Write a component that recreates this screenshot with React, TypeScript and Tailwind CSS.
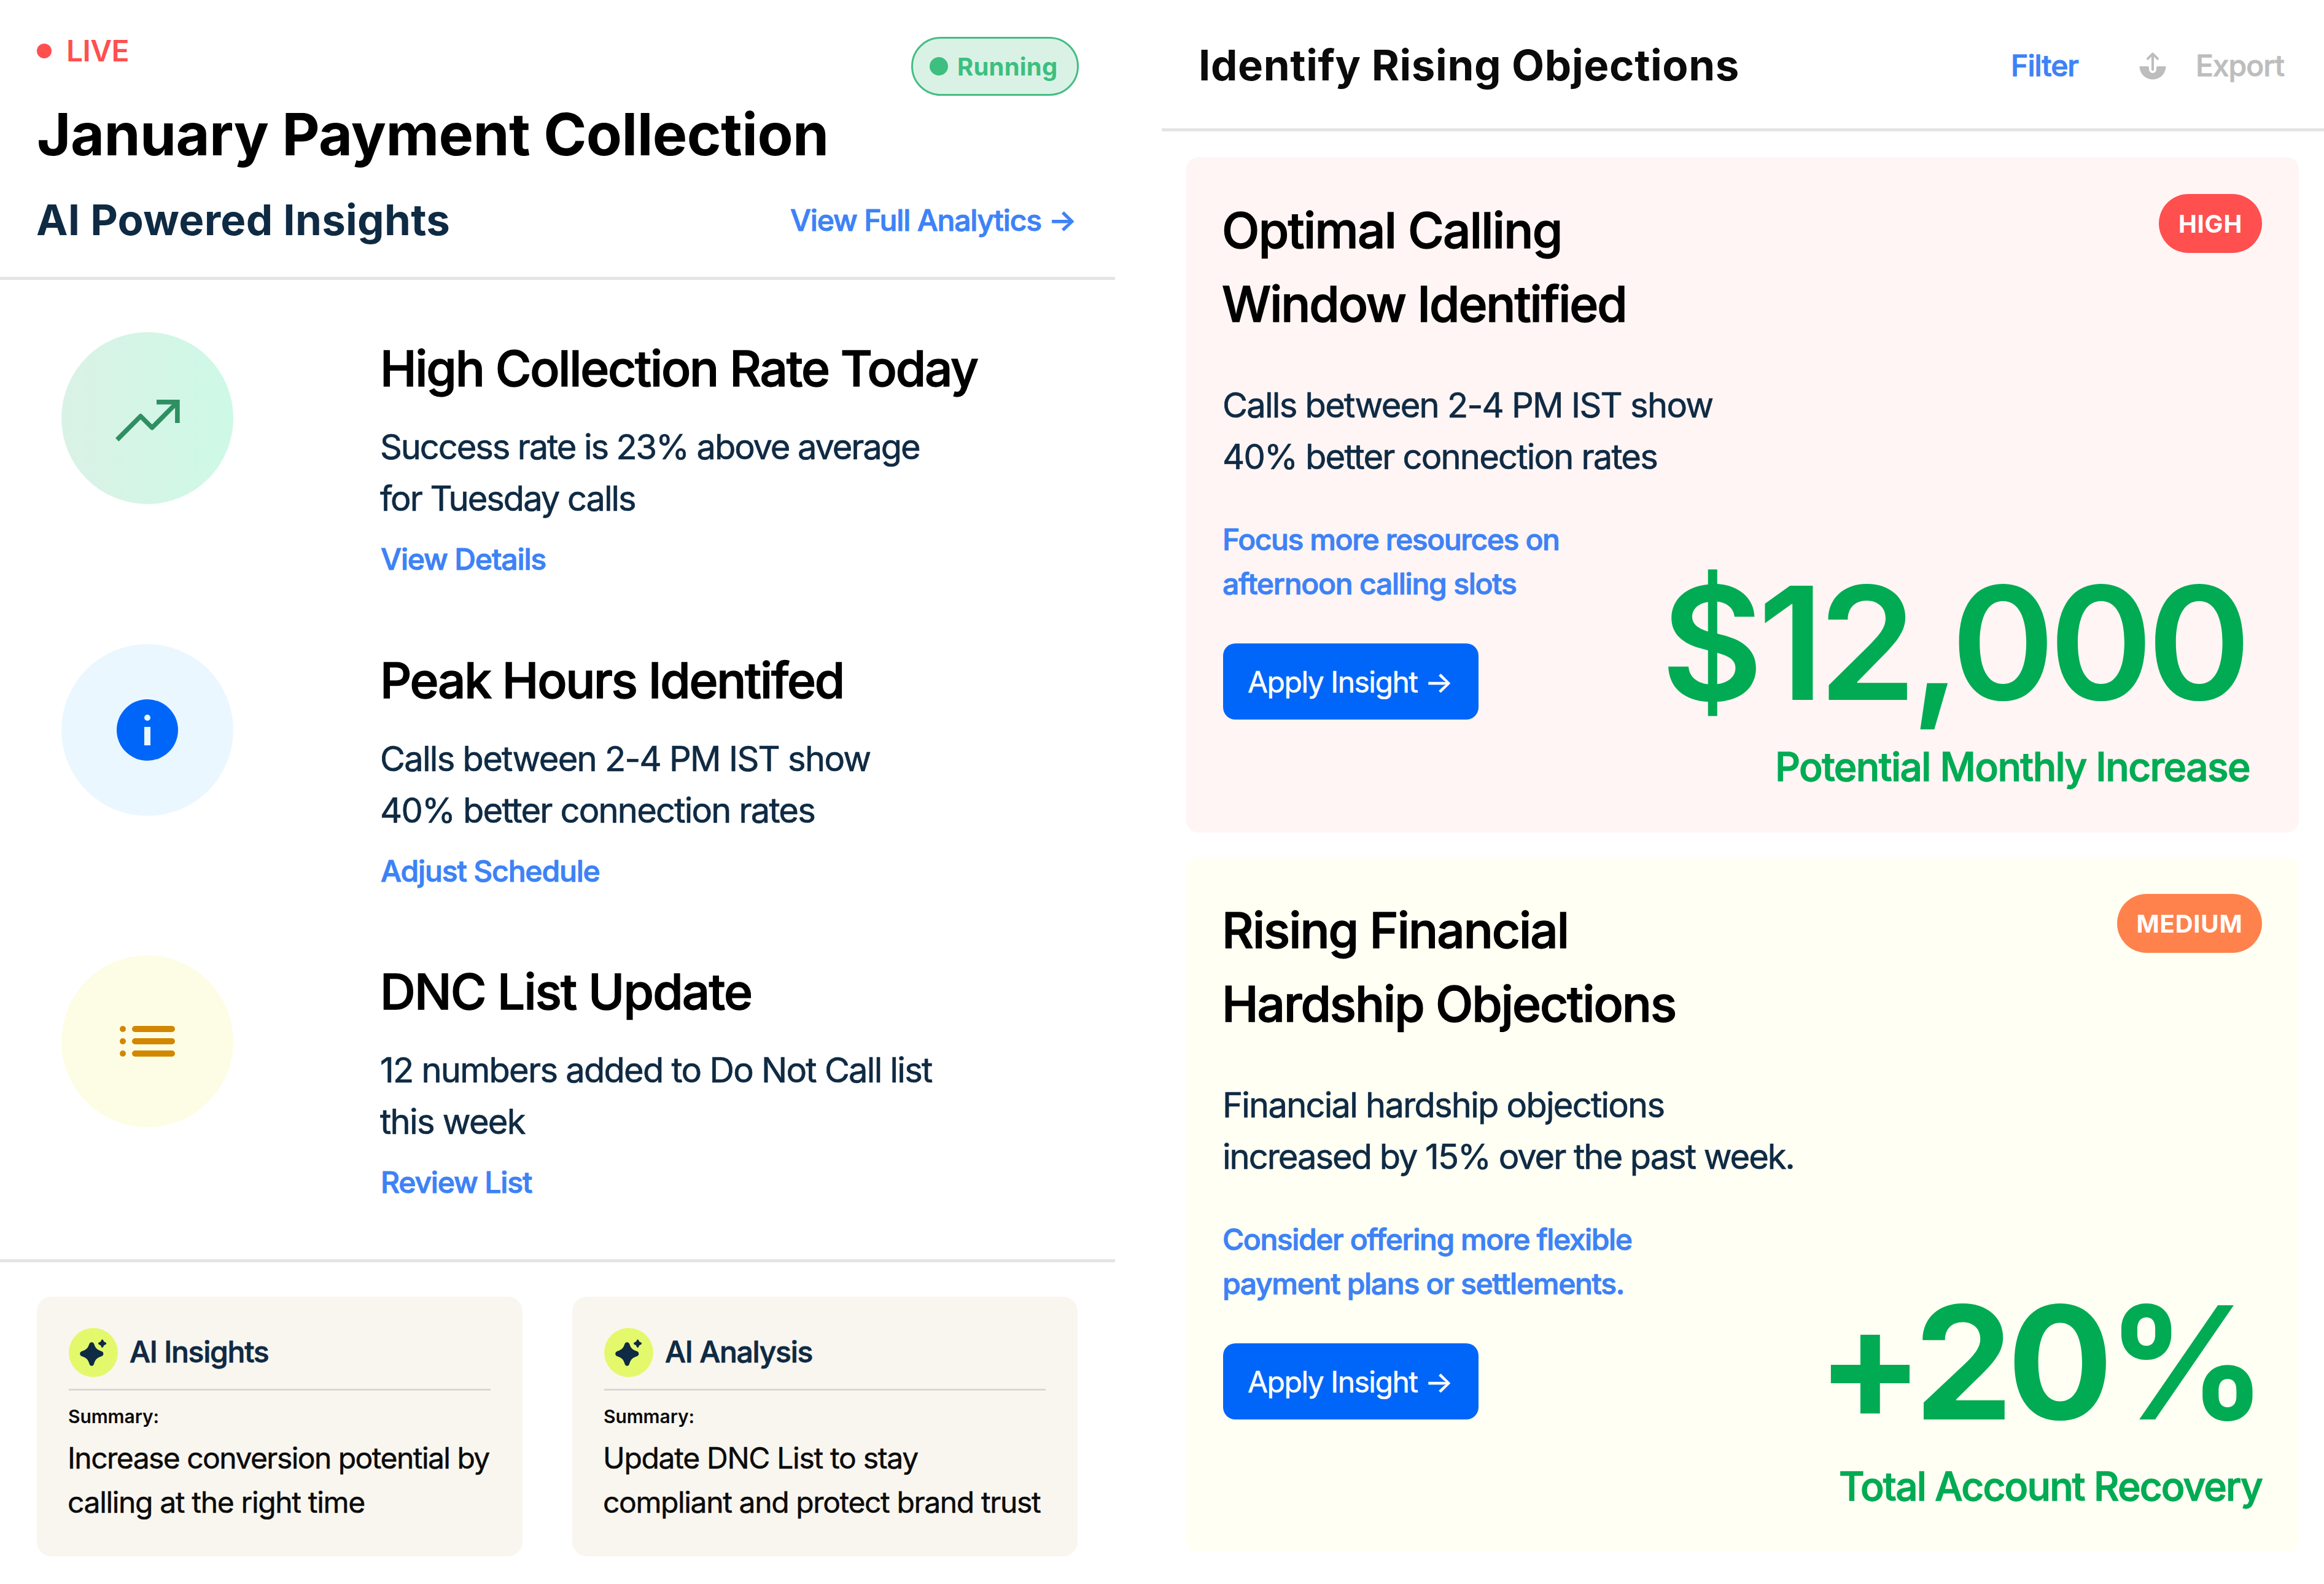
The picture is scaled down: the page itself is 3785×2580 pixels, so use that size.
import type { ReactNode } from 'react';

const TrendIcon = () => (
  <svg className="size-[120px]" viewBox="0 0 120 120" fill="none" stroke="#2f8f63" strokeWidth="7.6">
    <path d="M10.7 95.2 49 56.9l18.7 18.7 40.6-41" strokeLinejoin="round" />
    <path d="M75 33.9h33.9V68" strokeLinejoin="miter" />
  </svg>
);

const InfoIcon = () => (
  <svg className="size-[120px]" viewBox="0 0 120 120">
    <circle cx="60" cy="60" r="50" fill="#0066f9" />
    <circle cx="60" cy="40" r="5" fill="#ebf7ff" />
    <rect x="55" y="55" width="10" height="30" fill="#ebf7ff" />
  </svg>
);

const ListIcon = () => (
  <svg className="size-[120px]" viewBox="0 0 120 120" fill="#d28700">
    {[40, 60, 80].map((y) => (
      <g key={y}>
        <circle cx="20" cy={y} r="5" />
        <rect x="35" y={y - 5} width="70" height="10" rx="5" />
      </g>
    ))}
  </svg>
);

const SparkleIcon = () => (
  <svg className="size-[80px]" viewBox="0 0 80 80" fill="#0f2a43">
    <path d="M37.3 23.3c2 0 3.4 1.2 4.1 3.3 2 6.3 4.7 9 11 11 2.6.8 4 2.4 4 4.5s-1.4 3.7-4 4.5c-6.3 2-9 4.7-11 11-.7 2.8-2.1 4.200-4.100 4.200s-3.400-1.400-4.100-4.200c-2-6.300-4.700-9-11-11-2.600-.8-4-2.400-4-4.500s1.400-3.700 4-4.500c6.300-2 9-4.700 11-11 .7-2.100 2.100-3.300 4.100-3.300Z" />
    <path d="M54.600 18.800c1 0 1.500.8 1.800 1.700.5 1.600 1.300 2.300 2.900 2.800 1 .3 1.800 1 1.800 2s-.8 1.700-1.800 2c-1.600.5-2.400 1.300-2.900 2.900-.3.900-.8 1.700-1.800 1.700s-1.500-.8-1.800-1.700c-.5-1.600-1.300-2.400-2.900-2.900-1-.3-1.800-1-1.800-2s.8-1.700 1.800-2c1.600-.5 2.400-1.200 2.900-2.800.3-.9.8-1.700 1.800-1.700Z" />
  </svg>
);

const ExportIcon = () => (
  <svg className="size-[48px]" viewBox="0 0 48 48" fill="#bdbdbd">
    <path d="M2.500 25A21.500 21.500 0 0 0 45.500 25H32a2 2 0 0 0-2 2v3a6 6 0 0 1-12 0v-3a2 2 0 0 0-2-2Z" />
    <path d="M24 5v25.500M16 12.600l8-8 8 8" fill="none" stroke="#bdbdbd" strokeWidth="4" strokeLinecap="round" strokeLinejoin="round" />
  </svg>
);

/* A line of text and the letter-spacing class it is set with. */
type Line = [text: string, tracking: string];

const Lines = ({ lines }: { lines: Line[] }) => (
  <>
    {lines.map(([text, tracking]) => (
      <span key={text} className={`block ${tracking}`}>{text}</span>
    ))}
  </>
);

const titleText = 'text-[80px] leading-[120px] font-medium text-black [-webkit-text-stroke:1.4px]';
const bodyText = 'text-[56px] leading-[84px] text-[#0f2a43] [-webkit-text-stroke:0.7px]';
const linkText = 'text-[48px] leading-[72px] font-medium text-[#3d82f6] [-webkit-text-stroke:1px]';

type Insight = { title: Line; lines: Line[]; link: string; tone: string; icon: ReactNode };

const insights: Insight[] = [
  {
    title: ['High Collection Rate Today', 'tracking-[-2.2px]'],
    lines: [['Success rate is 23% above average', 'tracking-[-2.1px]'], ['for Tuesday calls', 'tracking-[-2px]']],
    link: 'View Details',
    tone: 'bg-linear-to-r from-[#daf2e6] to-[#cef9e7]',
    icon: <TrendIcon />,
  },
  {
    title: ['Peak Hours Identifed', 'tracking-[-2.25px]'],
    lines: [['Calls between 2-4 PM IST show', 'tracking-[-1.7px]'], ['40% better connection rates', 'tracking-[-1.8px]']],
    link: 'Adjust Schedule',
    tone: 'bg-[#ebf7ff]',
    icon: <InfoIcon />,
  },
  {
    title: ['DNC List Update', 'tracking-[-1.8px]'],
    lines: [['12 numbers added to Do Not Call list', 'tracking-[-1.73px]'], ['this week', 'tracking-[-1.7px]']],
    link: 'Review List',
    tone: 'bg-[#fdfde5]',
    icon: <ListIcon />,
  },
];

function InsightRow({ title, lines, link, tone, icon }: Insight) {
  return (
    <div className="flex h-[408px]">
      <div className={`flex size-[280px] shrink-0 items-center justify-center rounded-full ${tone}`}>{icon}</div>
      <div className="-mt-px ml-[239px] whitespace-nowrap">
        <h3 className={titleText}><Lines lines={[title]} /></h3>
        <p className={`mt-[26px] ${bodyText}`}><Lines lines={lines} /></p>
        <a className={`mt-[21px] ml-px block tracking-[-1.15px] ${linkText}`}>{link}</a>
      </div>
    </div>
  );
}

function SummaryCard({ title, lines, width }: { title: string; lines: Line[]; width: string }) {
  return (
    <div className={`h-[423px] rounded-[24px] bg-[#f9f6f0] px-[52px] pt-[51px] whitespace-nowrap ${width}`}>
      <div className="flex items-center">
        <div className="size-[80px] rounded-full bg-[#e3f96b]"><SparkleIcon /></div>
        <h4 className="-mt-0.5 ml-[19px] text-[48px] leading-[72px] font-medium tracking-[-1.25px] text-[#0f2a43] [-webkit-text-stroke:0.8px]">{title}</h4>
      </div>
      <div className="mt-[18.5px] h-[3px] bg-[#d9d7d2]" />
      <p className="mt-[24px] -ml-px text-[30px] leading-[36px] font-semibold tracking-[-0.1px] text-[#0b0b0b]">Summary:</p>
      <p className="mt-[14px] -ml-[2px] text-[48px] leading-[72px] text-[#0b0b0b] [-webkit-text-stroke:0.5px]">
        <Lines lines={lines} />
      </p>
    </div>
  );
}

type Objection = {
  title: Line[];
  lines: Line[];
  tip: Line[];
  level: string;
  value: string;
  label: string;
  cardClass: string;
  badgeClass: string;
  valueClass: string;
  labelClass: string;
};

const objections: Objection[] = [
  {
    title: [['Optimal Calling', 'tracking-[-1.65px]'], ['Window Identified', 'tracking-[-2.05px]']],
    lines: [['Calls between 2-4 PM IST show', 'tracking-[-1.7px]'], ['40% better connection rates', 'tracking-[-1.8px]']],
    tip: [['Focus more resources on', 'tracking-[-1.4px]'], ['afternoon calling slots', 'tracking-[-1.25px]']],
    level: 'HIGH',
    value: '$12,000',
    label: 'Potential Monthly Increase',
    cardClass: 'mt-[42px] h-[1100px] bg-[#fff5f4]',
    badgeClass: 'w-[168px] bg-[#ff4f4f]',
    valueClass: 'mr-[27px] font-semibold tracking-[-9.1px]',
    labelClass: 'mr-[20px] tracking-[-1.55px]',
  },
  {
    title: [['Rising Financial', 'tracking-[-1.95px]'], ['Hardship Objections', 'tracking-[-2px]']],
    lines: [['Financial hardship objections', 'tracking-[-1.75px]'], ['increased by 15% over the past week.', 'tracking-[-2px]']],
    tip: [['Consider offering more flexible', 'tracking-[-1.4px]'], ['payment plans or settlements.', 'tracking-[-1.3px]']],
    level: 'MEDIUM',
    value: '+20%',
    label: 'Total Account Recovery',
    cardClass: 'mt-[40px] h-[1132px] bg-[#fffff3]',
    badgeClass: 'w-[236px] bg-[#ff824d]',
    valueClass: 'mr-[2px] font-bold tracking-[-9.8px]',
    labelClass: 'tracking-[-1.8px]',
  },
];

function ObjectionCard(o: Objection) {
  return (
    <div className={`flex w-[1812px] justify-between rounded-[20px] px-[60px] pt-[60px] pb-[59px] whitespace-nowrap ${o.cardClass}`}>
      <div className="-mt-px flex w-[700px] shrink-0 flex-col items-start">
        <h3 className={`-ml-[2px] ${titleText}`}><Lines lines={o.title} /></h3>
        <p className={`mt-[63px] -ml-px ${bodyText}`}><Lines lines={o.lines} /></p>
        <p className={`mt-[57px] -ml-px ${linkText}`}><Lines lines={o.tip} /></p>
        <button className="mt-[61px] h-[124px] w-[416px] rounded-[20px] bg-[#0066f9] pt-[2px] pl-[40px] text-left text-[48px] tracking-[-1.5px] text-white [-webkit-text-stroke:0.5px]">
          Apply Insight →
        </button>
      </div>
      <div className="flex flex-col items-end">
        <span className={`flex h-[96px] items-center justify-center rounded-full pt-[2px] text-[40px] font-bold tracking-[0.8px] text-white ${o.badgeClass}`}>
          {o.level}
        </span>
        <div className={`mt-auto text-[256px] leading-[256px] text-[#00ab53] ${o.valueClass}`}>{o.value}</div>
        <div className={`mt-[26px] text-[64px] leading-[96px] font-medium text-[#00ab53] [-webkit-text-stroke:1.3px] ${o.labelClass}`}>{o.label}</div>
      </div>
    </div>
  );
}

export default function App() {
  return (
    <div className="flex h-[2580px] w-[3785px] justify-between overflow-hidden bg-white font-[Inter,sans-serif]">
      <section className="w-[1816px] whitespace-nowrap">
        <header className="h-[456px] border-b-[5px] border-[#e4e4e4] pt-[60px] pr-[59px] pl-[60px]">
          <div className="flex h-[96px] items-start justify-between">
            <div className="flex h-[46px] items-center text-[48px] font-semibold tracking-[-0.6px] text-[#ff4f4f]">
              <span className="mr-[24px] size-[24px] rounded-full bg-[#ff4f4f]" />
              LIVE
            </div>
            <div className="flex h-[96px] w-[273px] items-center rounded-full border-[3px] border-[#45bd83] bg-[#daf2e6] pl-[27px] text-[40px] font-bold tracking-[0.2px] text-[#3cbf7f]">
              <span className="mr-[15px] size-[30px] rounded-full bg-[#3cbf7f]" />
              <span className="pt-[2px]">Running</span>
            </div>
          </div>
          <h1 className="mt-[5px] text-[95px] leading-[116px] font-bold tracking-[-0.6px] text-black">January Payment Collection</h1>
          <div className="mt-[33px] flex h-[97px] items-center justify-between">
            <h2 className="-ml-px text-[69px] font-bold tracking-[0.3px] text-[#0f2a43]">AI Powered Insights</h2>
            <a className={`mr-[5px] tracking-[-1.2px] ${linkText}`}>View Full Analytics →</a>
          </div>
        </header>

        <div className="flex h-[1600px] flex-col gap-[99.5px] border-b-[5px] border-[#e4e4e4] pt-[85px] pl-[100px]">
          {insights.map((i) => (
            <InsightRow key={i.link} {...i} />
          ))}
        </div>

        <div className="flex gap-[81px] pt-[56px] pl-[60px]">
          <SummaryCard
            title="AI Insights"
            lines={[['Increase conversion potential by', 'tracking-[-1.55px]'], ['calling at the right time', 'tracking-[-1.35px]']]}
            width="w-[791px]"
          />
          <SummaryCard
            title="AI Analysis"
            lines={[['Update DNC List to stay', 'tracking-[-1.3px]'], ['compliant and protect brand trust', 'tracking-[-1.38px]']]}
            width="w-[823px]"
          />
        </div>
      </section>

      <section className="w-[1893px] whitespace-nowrap">
        <header className="flex h-[214px] items-center border-b-[5px] border-[#e4e4e4] pt-[4px] pr-[65px] pl-[60px]">
          <h2 className="mr-auto text-[69px] font-bold tracking-[0.6px] text-[#0b0b0b]">Identify Rising Objections</h2>
          <a className={`tracking-[-1px] ${linkText}`}>Filter</a>
          <span className="ml-[97px] flex items-center gap-[46px] text-[48px] font-medium tracking-[-1px] text-[#bdbdbd] [-webkit-text-stroke:0.8px]">
            <ExportIcon />
            Export
          </span>
        </header>
        <div className="pl-[40px]">
          {objections.map((o) => (
            <ObjectionCard key={o.level} {...o} />
          ))}
        </div>
      </section>
    </div>
  );
}
